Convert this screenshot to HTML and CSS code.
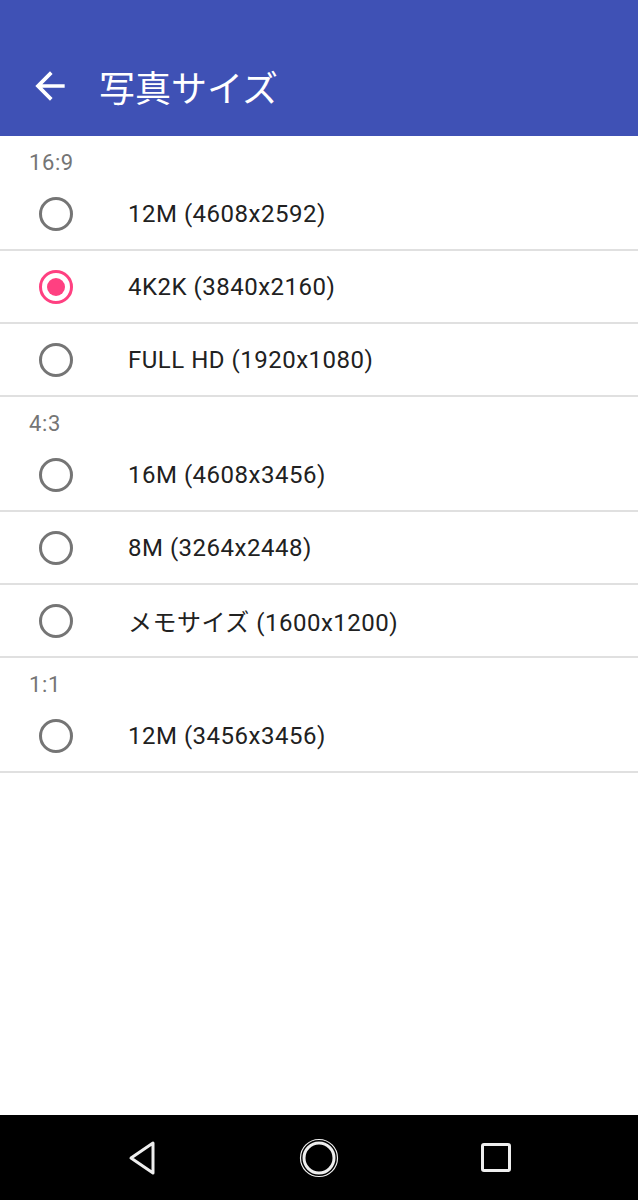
FILE: index.html
```html
<!DOCTYPE html>
<html lang="ja">
<head>
<meta charset="utf-8">
<link rel="stylesheet" href="styles.css">
</head>
<body>
<div class="screen">
  <header class="appbar">
    <svg class="back" width="44" height="44" viewBox="0 0 24 24"><path d="M20 11H7.83l5.59-5.59L12 4l-8 8 8 8 1.41-1.41L7.83 13H20v-2z" fill="#fff"/></svg>
    <h1 class="title">写真サイズ</h1>
  </header>
  <main class="list">
    <div class="section">16:9</div>
    <div class="row"><span class="radio"></span><span class="label">12M (4608x2592)</span></div>
    <div class="row"><span class="radio on"></span><span class="label">4K2K (3840x2160)</span></div>
    <div class="row"><span class="radio"></span><span class="label">FULL HD (1920x1080)</span></div>
    <div class="section">4:3</div>
    <div class="row"><span class="radio"></span><span class="label">16M (4608x3456)</span></div>
    <div class="row"><span class="radio"></span><span class="label">8M (3264x2448)</span></div>
    <div class="row"><span class="radio"></span><span class="label">メモサイズ (1600x1200)</span></div>
    <div class="section">1:1</div>
    <div class="row"><span class="radio"></span><span class="label">12M (3456x3456)</span></div>
  </main>
  <nav class="navbar">
    <svg width="34" height="36" viewBox="0 0 34 36"><path d="M29 3 L29 33 L7 18 Z" fill="none" stroke="#eee" stroke-width="3" stroke-linejoin="round"/></svg>
    <svg width="40" height="40" viewBox="0 0 40 40"><circle cx="20" cy="20" r="18.5" fill="none" stroke="#eee" stroke-width="1.2"/><circle cx="20" cy="20" r="15" fill="none" stroke="#eee" stroke-width="3"/></svg>
    <svg width="32" height="32" viewBox="0 0 32 32"><rect x="2.5" y="2.5" width="27" height="26" rx="1.5" fill="none" stroke="#eee" stroke-width="3"/></svg>
  </nav>
</div>
</body>
</html>
```

FILE: styles.css
```css
* { box-sizing: border-box; }
html, body { margin: 0; padding: 0; background: #fff; }
body { font-family: Roboto, "Noto Sans CJK JP", sans-serif; }
.screen { width: 638px; height: 1200px; display: flex; flex-direction: column; }
.appbar {
  height: 136px;
  background: #3F51B5;
  display: flex;
  align-items: center;
  padding: 36px 0 0 28px;
}
.back { display: block; }
.title {
  margin: 0 0 0 27px;
  color: #fff;
  font-size: 36px;
  font-weight: 400;
  font-family: "Noto Sans CJK JP", sans-serif;
}
.list { flex: 1; }
.section {
  height: 42px;
  padding: 14px 0 0 29px;
  font-size: 22px;
  letter-spacing: 0.6px;
  color: #757575;
  line-height: 26px;
}
.row {
  height: 73px;
  display: flex;
  align-items: center;
  border-bottom: 2px solid #e0e0e0;
}
.radio {
  width: 34px;
  height: 34px;
  border-radius: 50%;
  border: 3px solid #757575;
  margin-left: 39px;
  margin-right: 55px;
  flex: none;
  position: relative;
}
.radio.on { border-color: #FF4081; }
.radio.on::after {
  content: "";
  position: absolute;
  left: 5px; top: 5px;
  width: 18px; height: 18px;
  border-radius: 50%;
  background: #FF4081;
}
.label {
  font-size: 24px;
  letter-spacing: 0.5px;
  color: #212121;
  font-family: Roboto, "Noto Sans CJK JP", sans-serif;
}
.navbar {
  height: 85px;
  background: #000;
  display: flex;
  align-items: center;
  justify-content: space-between;
  padding: 0 126px 0 124px;
}
.navbar svg { display: block; }
```
